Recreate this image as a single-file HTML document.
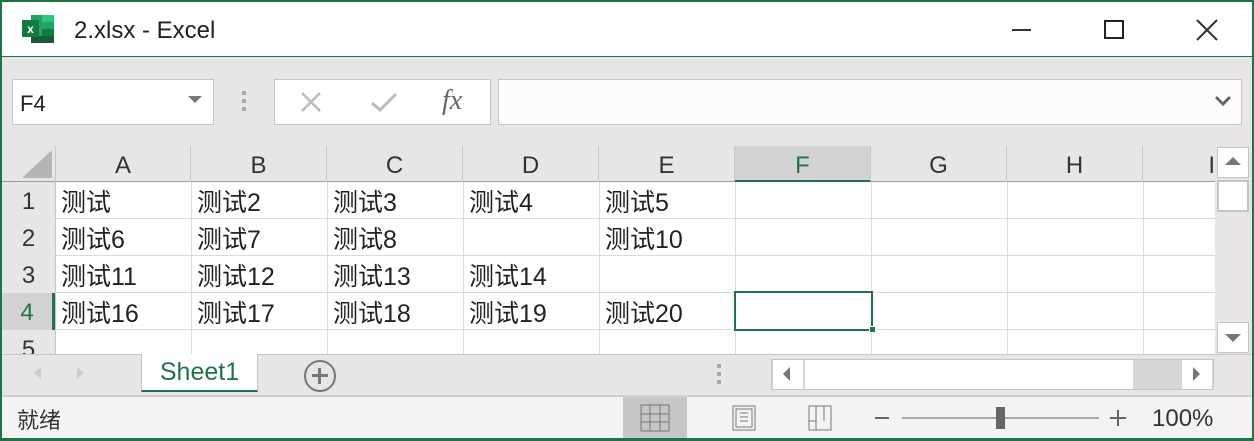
<!DOCTYPE html>
<html><head><meta charset="utf-8"><style>
*{margin:0;padding:0;box-sizing:border-box}
body{width:1254px;height:441px;overflow:hidden;background:#e6e6e6;font-family:"Liberation Sans","Noto Sans CJK SC",sans-serif;position:relative;color:#222}
.a{position:absolute}
.cell{position:absolute;font-size:25px;line-height:37px;padding-left:6px;white-space:nowrap;color:#222}
.ch{position:absolute;top:146px;height:36px;font-size:24px;line-height:40px;text-align:center;border-right:1px solid #c6c6c6;color:#333}
.rh{position:absolute;left:2px;width:53px;font-size:24px;line-height:40px;text-align:center;color:#333}
.vl{position:absolute;top:182px;height:173px;width:1px;background:#dadada}
.hl{position:absolute;left:55px;width:1160px;height:1px;background:#dadada}
</style></head><body>
<div class="a" style="left:0;top:0;width:1254px;height:441px;border:2px solid #217346;border-bottom-width:3px;z-index:9;pointer-events:none"></div>
<div class="a" style="left:0;top:0;width:1254px;height:57px;background:#fff;border-bottom:1px solid #217346"></div>
<svg class="a" style="left:22px;top:14px" width="33" height="30" viewBox="0 0 33 30"><rect x="9" y="1" width="23" height="28" fill="#21a366"/><rect x="20" y="1" width="12" height="7" fill="#33c481"/><rect x="20" y="15" width="12" height="7" fill="#107c41"/><rect x="9" y="22" width="23" height="7" fill="#185c37"/><rect x="0" y="6" width="17" height="17" fill="#107c41"/><text x="8.5" y="19" font-size="12" font-weight="bold" fill="#fff" text-anchor="middle" font-family="Liberation Sans">x</text></svg>
<div class="a" style="left:74px;top:17px;font-size:24px;color:#222">2.xlsx - Excel</div>
<div class="a" style="left:1012px;top:29px;width:19px;height:2px;background:#333"></div>
<div class="a" style="left:1104px;top:20px;width:20px;height:19px;border:2px solid #222"></div>
<svg class="a" style="left:1196px;top:19px" width="22" height="22"><path d="M1 1L21 21M21 1L1 21" stroke="#333" stroke-width="2"/></svg>
<div class="a" style="left:12px;top:79px;width:202px;height:46px;background:#fff;border:1px solid #c6c6c6"></div>
<div class="a" style="left:20px;top:91px;font-size:22px">F4</div>
<div class="a" style="left:188px;top:96px;border:7px solid transparent;border-top:7px solid #777;border-bottom:0"></div>
<div class="a" style="left:242px;top:91px;width:4px;height:4px;background:#aaa;box-shadow:0 8px #aaa,0 16px #aaa"></div>
<div class="a" style="left:274px;top:79px;width:217px;height:46px;background:#fff;border:1px solid #c6c6c6"></div>
<svg class="a" style="left:300px;top:91px" width="22" height="22"><path d="M2 2L20 20M20 2L2 20" stroke="#bbb" stroke-width="2.5"/></svg>
<svg class="a" style="left:370px;top:91px" width="28" height="22"><path d="M2 12L10 19L26 3" stroke="#bbb" stroke-width="3" fill="none"/></svg>
<div class="a" style="left:442px;top:85px;font-size:28px;font-style:italic;font-family:'Liberation Serif',serif;color:#666">fx</div>
<div class="a" style="left:498px;top:79px;width:744px;height:46px;background:#fcfcfc;border:1px solid #c6c6c6"></div>
<svg class="a" style="left:1214px;top:94px" width="18" height="14"><path d="M2 3L9 10L16 3" stroke="#666" stroke-width="3" fill="none"/></svg>
<div class="a" style="left:2px;top:146px;width:1213px;height:36px;background:#e6e6e6;border-bottom:1px solid #9b9b9b"></div>
<svg class="a" style="left:22px;top:150px" width="32" height="28"><path d="M30 0V28H0Z" fill="#b4b4b4"/></svg>
<div class="a" style="left:55px;top:182px;width:1160px;height:173px;background:#fff"></div>
<div class="ch" style="left:55px;width:136px;border-left:1px solid #c6c6c6">A</div>
<div class="ch" style="left:191px;width:136px">B</div>
<div class="ch" style="left:327px;width:136px">C</div>
<div class="ch" style="left:463px;width:136px">D</div>
<div class="ch" style="left:599px;width:136px">E</div>
<div class="ch" style="left:735px;width:136px;background:#d2d2d2;color:#217346;border-bottom:2px solid #217346">F</div>
<div class="ch" style="left:871px;width:136px">G</div>
<div class="ch" style="left:1007px;width:136px">H</div>
<div class="ch" style="left:1143px;width:72px;text-align:right;border:0">I</div>
<div class="rh" style="top:182px">1</div>
<div class="rh" style="top:219px">2</div>
<div class="rh" style="top:256px">3</div>
<div class="rh" style="top:293px;height:37px;background:#d2d2d2;color:#217346;border-right:3px solid #217346">4</div>
<div class="rh" style="top:330px;height:25px;overflow:hidden">5</div>
<div class="vl" style="left:55px;background:#c6c6c6"></div>
<div class="vl" style="left:191px"></div><div class="vl" style="left:327px"></div><div class="vl" style="left:463px"></div><div class="vl" style="left:599px"></div><div class="vl" style="left:735px"></div><div class="vl" style="left:871px"></div><div class="vl" style="left:1007px"></div><div class="vl" style="left:1143px"></div>
<div class="hl" style="top:218px"></div><div class="hl" style="top:255px"></div><div class="hl" style="top:292px"></div><div class="hl" style="top:329px"></div>
<div class="cell" style="left:55px;top:185px">测试</div><div class="cell" style="left:191px;top:185px">测试2</div><div class="cell" style="left:327px;top:185px">测试3</div><div class="cell" style="left:463px;top:185px">测试4</div><div class="cell" style="left:599px;top:185px">测试5</div>
<div class="cell" style="left:55px;top:222px">测试6</div><div class="cell" style="left:191px;top:222px">测试7</div><div class="cell" style="left:327px;top:222px">测试8</div><div class="cell" style="left:599px;top:222px">测试10</div>
<div class="cell" style="left:55px;top:259px">测试11</div><div class="cell" style="left:191px;top:259px">测试12</div><div class="cell" style="left:327px;top:259px">测试13</div><div class="cell" style="left:463px;top:259px">测试14</div>
<div class="cell" style="left:55px;top:296px">测试16</div><div class="cell" style="left:191px;top:296px">测试17</div><div class="cell" style="left:327px;top:296px">测试18</div><div class="cell" style="left:463px;top:296px">测试19</div><div class="cell" style="left:599px;top:296px">测试20</div>
<div class="a" style="left:734px;top:291px;width:139px;height:40px;border:2px solid #217346"></div>
<div class="a" style="left:869px;top:326px;width:7px;height:7px;background:#217346;border:1px solid #fff"></div>
<div class="a" style="left:1215px;top:146px;width:37px;height:209px;background:#e6e6e6"></div>
<div class="a" style="left:1217px;top:147px;width:32px;height:31px;background:#fff;border:1px solid #c6c6c6"></div>
<div class="a" style="left:1225px;top:157px;border:8px solid transparent;border-bottom:8px solid #777;border-top:0"></div>
<div class="a" style="left:1217px;top:180px;width:32px;height:32px;background:#fff;border:2px solid #c6c6c6"></div>
<div class="a" style="left:1217px;top:322px;width:32px;height:31px;background:#fff;border:1px solid #c6c6c6"></div>
<div class="a" style="left:1225px;top:334px;border:8px solid transparent;border-top:8px solid #777;border-bottom:0"></div>
<div class="a" style="left:2px;top:354px;width:1250px;height:1px;background:#c6c6c6"></div>
<div class="a" style="left:34px;top:367px;border:6px solid transparent;border-right:7px solid #ccc;border-left:0"></div>
<div class="a" style="left:77px;top:367px;border:6px solid transparent;border-left:7px solid #ccc;border-right:0"></div>
<div class="a" style="left:141px;top:354px;width:117px;height:38px;background:#fff;border-bottom:2px solid #217346;border-left:1px solid #c6c6c6;border-right:1px solid #c6c6c6"></div>
<div class="a" style="left:141px;top:358px;width:117px;text-align:center;font-size:25px;color:#217346">Sheet1</div>
<div class="a" style="left:304px;top:360px;width:32px;height:32px;border:2px solid #777;border-radius:50%"></div>
<div class="a" style="left:312px;top:374px;width:16px;height:3px;background:#777"></div>
<div class="a" style="left:318px;top:368px;width:3px;height:16px;background:#777"></div>
<div class="a" style="left:717px;top:364px;width:4px;height:4px;background:#aaa;box-shadow:0 8px #aaa,0 16px #aaa"></div>
<div class="a" style="left:771px;top:359px;width:443px;height:31px;background:#d6d6d6;border:1px solid #c6c6c6"></div>
<div class="a" style="left:773px;top:360px;width:30px;height:29px;background:#fff"></div>
<div class="a" style="left:783px;top:367px;border:7px solid transparent;border-right:7px solid #777;border-left:0"></div>
<div class="a" style="left:805px;top:360px;width:328px;height:29px;background:#fff"></div>
<div class="a" style="left:1182px;top:360px;width:30px;height:29px;background:#fff"></div>
<div class="a" style="left:1193px;top:367px;border:7px solid transparent;border-left:7px solid #777;border-right:0"></div>
<div class="a" style="left:2px;top:395px;width:1250px;height:2px;background:#d0d0d0"></div>
<div class="a" style="left:2px;top:397px;width:1250px;height:42px;background:#f3f3f3"></div>
<div class="a" style="left:17px;top:403px;font-size:22px;color:#333">就绪</div>
<div class="a" style="left:623px;top:397px;width:64px;height:42px;background:#c6c6c6"></div>
<svg class="a" style="left:640px;top:404px" width="30" height="28"><path d="M1 1H29V27H1ZM10 1V27M20 1V27M1 10H29M1 18H29" stroke="#777" fill="none"/></svg>
<svg class="a" style="left:732px;top:405px" width="24" height="26"><path d="M1 1H23V25H1ZM4 4H20V22H4ZM8 8H16M8 12H16M8 16H16" stroke="#777" fill="none"/></svg>
<svg class="a" style="left:808px;top:405px" width="24" height="26"><path d="M1 1H23V25H1ZM8 1V16H1M8 16V25M16 1V16" stroke="#777" fill="none"/></svg>
<div class="a" style="left:875px;top:417px;width:14px;height:2px;background:#666"></div>
<div class="a" style="left:902px;top:417px;width:197px;height:2px;background:#aaa"></div>
<div class="a" style="left:996px;top:407px;width:9px;height:22px;background:#666"></div>
<div class="a" style="left:1110px;top:417px;width:16px;height:2px;background:#666"></div>
<div class="a" style="left:1117px;top:410px;width:2px;height:16px;background:#666"></div>
<div class="a" style="left:1152px;top:405px;font-size:24px;color:#333">100%</div>
</body></html>
